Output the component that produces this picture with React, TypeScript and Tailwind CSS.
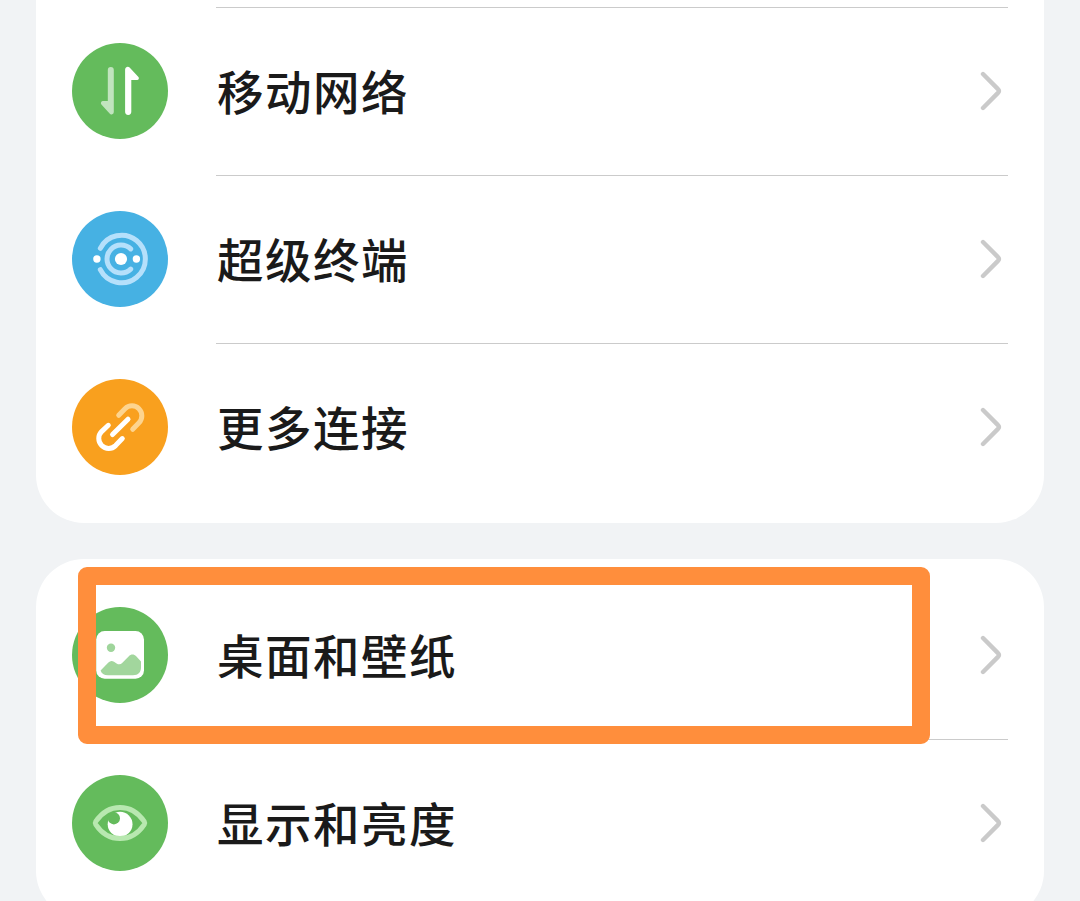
import React from 'react';

export default function App() {
  return (
    <div className="h-[901px] overflow-hidden bg-[#f1f3f5] px-9 font-['Noto_Sans_CJK_SC',sans-serif]">
      <section className="bg-white rounded-b-[48px] pt-[7px] pb-3">
        <SettingRow label="移动网络" color="bg-[#64bb5c]" icon={<MobileDataIcon />} divider />
        <SettingRow label="超级终端" color="bg-[#46b1e3]" icon={<SuperDeviceIcon />} divider />
        <SettingRow label="更多连接" color="bg-[#f9a01e]" icon={<LinkIcon />} divider />
      </section>

      <section className="mt-9 bg-white rounded-[48px] py-3">
        <SettingRow label="桌面和壁纸" color="bg-[#64bb5c]" icon={<WallpaperIcon />} highlighted />
        <SettingRow label="显示和亮度" color="bg-[#64bb5c]" icon={<EyeIcon />} divider />
      </section>
    </div>
  );
}

type SettingRowProps = {
  label: string;
  color: string;
  icon: React.ReactNode;
  divider?: boolean;
  highlighted?: boolean;
};

function SettingRow({ label, color, icon, divider, highlighted }: SettingRowProps) {
  return (
    <div className="relative flex items-center gap-12 h-[168px] px-9">
      <div className={`w-24 h-24 shrink-0 rounded-full ${color}`}>{icon}</div>
      <div
        className={`flex flex-1 items-center justify-between h-full pr-1 pb-px border-t ${
          divider ? 'border-[#cbcbcb]' : 'border-transparent'
        }`}
      >
        <span className="pl-px pb-0.5 text-[46.5px] leading-[72px] font-medium tracking-[1.5px] text-[#1a1a1a]">{label}</span>
        <Chevron />
      </div>
      {highlighted && (
        <div className="absolute z-10 left-[42px] -top-1 w-[852px] h-[177px] rounded-[9px] border-[18px] border-[#ff8e3c]" />
      )}
    </div>
  );
}

function Chevron() {
  return (
    <svg className="w-6 h-10" viewBox="0 0 24 40" fill="none" stroke="#cacaca" strokeWidth="4.4" strokeLinecap="round" strokeLinejoin="round">
      <path d="M3 3 L18 18.1 Q20 20 18 21.9 L3 37" />
    </svg>
  );
}

function MobileDataIcon() {
  return (
    <svg className="w-24 h-24" viewBox="0 0 96 96" fill="#fff">
      <path
        fillOpacity="0.6"
        d="M35.8 27 A3 3 0 0 1 41.8 27 V69 A2.4 2.4 0 0 1 37.6 70.6 L29.4 61.6 A2.2 2.2 0 0 1 31 58 H35.8 Z"
      />
      <path d="M59.3 68.8 A3.1 3.1 0 0 1 53.1 68.8 V26.4 A2.6 2.6 0 0 1 57.6 24.6 L66.2 33.8 A1.8 1.8 0 0 1 64.9 37 H59.3 Z" />
    </svg>
  );
}

function SuperDeviceIcon() {
  return (
    <svg className="w-24 h-24" viewBox="0 0 96 96" fill="none">
      <g stroke="#b5e0fb" strokeWidth="5" strokeLinecap="round">
        <path d="M28.3 37.3 A23.8 23.8 0 1 1 28.3 58.7" />
        <path d="M58.7 37.9 A14 14 0 1 0 58.7 58.1" />
      </g>
      <g fill="#fff">
        <circle cx="49" cy="48" r="6.1" />
        <circle cx="24.9" cy="48" r="3.7" />
        <circle cx="64.4" cy="48" r="3.7" />
      </g>
    </svg>
  );
}

function LinkIcon() {
  return (
    <svg className="w-24 h-24" viewBox="0 0 96 96" fill="none" stroke="#fff" strokeWidth="5" strokeLinecap="round">
      <path stroke="#fdd48f" d="M46.7 36.3 L53 29.7 A9.9 9.9 0 0 1 67 43.7 L60.7 50.3" />
      <path d="M36.3 46.3 L29.6 52.6 A9.9 9.9 0 0 0 43.6 66.6 L50.3 59.6" />
      <path d="M40.5 55.6 L56 40.2" />
    </svg>
  );
}

function WallpaperIcon() {
  return (
    <svg className="w-24 h-24" viewBox="0 0 96 96">
      <rect x="24.2" y="24" width="47.8" height="47.8" rx="8.5" fill="#fff" />
      <circle cx="39" cy="40.7" r="4.2" fill="#9fd59b" />
      <path
        fill="#a2d69d"
        d="M28.6 63.4 L36.4 55.6 C38.2 53.8 40 53.6 42 54.8 L44.6 56.4 C46.8 57.8 48.6 57.6 50.4 55.8 L56.6 49.4 C59 46.9 61.8 46.8 64.2 49.2 L69 54.6 V60 C69 65.4 66.4 68.2 61 68.2 H36 C32 68.2 29.4 66.6 28.6 63.4 Z"
      />
    </svg>
  );
}

function EyeIcon() {
  return (
    <svg className="w-24 h-24" viewBox="0 0 96 96" fill="none">
      <circle cx="48.1" cy="49.2" r="12.4" fill="#fff" />
      <circle cx="41.9" cy="43.3" r="6.1" fill="#64bb5c" />
      <path
        d="M23.8 46.4 C29.6 37.8 38 32.4 48 32.4 C58 32.4 66.4 37.8 72.2 46.4 Q73.2 48 72.2 49.6 C66.4 58.2 58 63.6 48 63.6 C38 63.6 29.6 58.2 23.8 49.6 Q22.8 48 23.8 46.4 Z"
        stroke="#b8e8b0"
        strokeWidth="5"
        strokeLinejoin="round"
      />
    </svg>
  );
}
